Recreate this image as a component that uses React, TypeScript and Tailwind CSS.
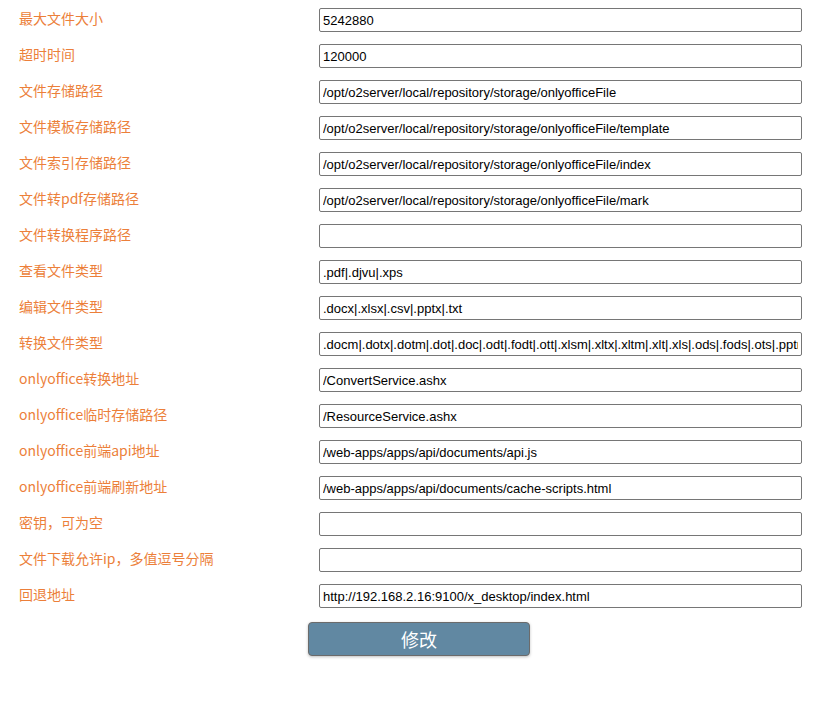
import React from 'react';

const rows: { label: string; value: string }[] = [
  { label: '最大文件大小', value: '5242880' },
  { label: '超时时间', value: '120000' },
  { label: '文件存储路径', value: '/opt/o2server/local/repository/storage/onlyofficeFile' },
  { label: '文件模板存储路径', value: '/opt/o2server/local/repository/storage/onlyofficeFile/template' },
  { label: '文件索引存储路径', value: '/opt/o2server/local/repository/storage/onlyofficeFile/index' },
  { label: '文件转pdf存储路径', value: '/opt/o2server/local/repository/storage/onlyofficeFile/mark' },
  { label: '文件转换程序路径', value: '' },
  { label: '查看文件类型', value: '.pdf|.djvu|.xps' },
  { label: '编辑文件类型', value: '.docx|.xlsx|.csv|.pptx|.txt' },
  {
    label: '转换文件类型',
    value: '.docm|.dotx|.dotm|.dot|.doc|.odt|.fodt|.ott|.xlsm|.xltx|.xltm|.xlt|.xls|.ods|.fods|.ots|.pptm|.ppt|.ppsx|.ppsm|.pps|.potx|.potm|.pot|.odp|.fodp|.otp|.rtf|.mht|.html|.htm|.epub',
  },
  { label: 'onlyoffice转换地址', value: '/ConvertService.ashx' },
  { label: 'onlyoffice临时存储路径', value: '/ResourceService.ashx' },
  { label: 'onlyoffice前端api地址', value: '/web-apps/apps/api/documents/api.js' },
  { label: 'onlyoffice前端刷新地址', value: '/web-apps/apps/api/documents/cache-scripts.html' },
  { label: '密钥，可为空', value: '' },
  { label: '文件下载允许ip，多值逗号分隔', value: '' },
  { label: '回退地址', value: 'http://192.168.2.16:9100/x_desktop/index.html' },
];

export default function App() {
  return (
    <div className="min-h-[704px] w-[823px] bg-white pt-[2px]">
      {rows.map((row) => (
        <div key={row.label} className="flex h-[36px] items-center">
          <div
            className="mb-[5px] w-[319px] pl-[19px] text-[14px] leading-[20px] text-[#ec7f3a]"
            style={{ fontFamily: '"Noto Sans CJK SC", "Noto Sans", sans-serif' }}
          >
            {row.label}
          </div>
          <input
            type="text"
            defaultValue={row.value}
            className="h-[24px] w-[483px] rounded-[2px] border border-[#767676] px-[3px] text-[13px] text-black outline-none"
            style={{ fontFamily: '"Liberation Sans", Arial, sans-serif' }}
          />
        </div>
      ))}
      <div className="flex pl-[308px] pt-[8px]">
        <button
          className="h-[34px] w-[222px] rounded-[4px] border border-[#6b6b6b] bg-[#6188a2] text-[18px] text-white shadow-[0_1px_3px_rgba(0,0,0,0.25)]"
          style={{ fontFamily: '"Noto Sans CJK SC", "Noto Sans", sans-serif' }}
        >
          修改
        </button>
      </div>
    </div>
  );
}
